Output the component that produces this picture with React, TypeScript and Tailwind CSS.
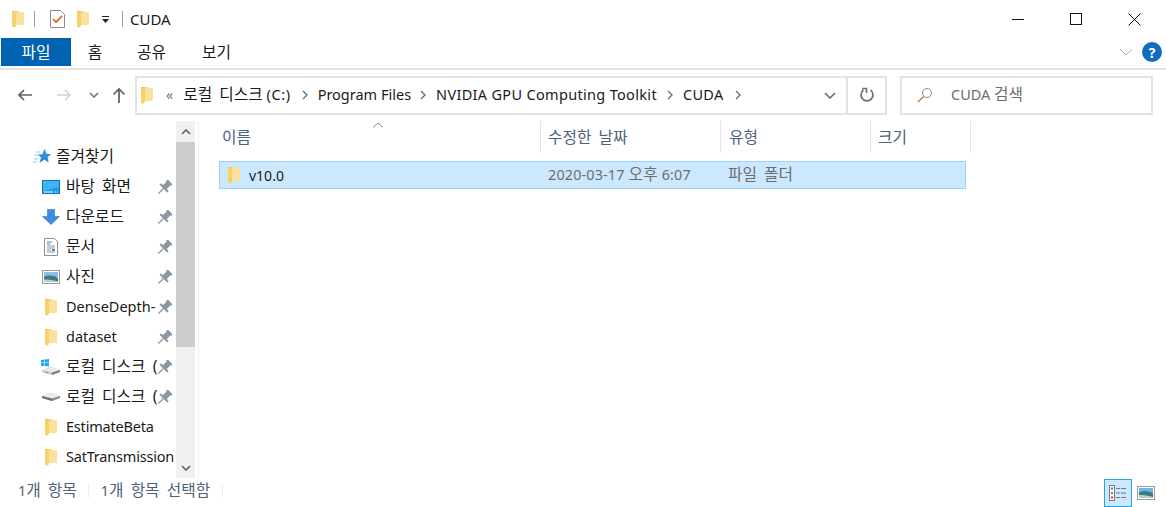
const FONT = "font-['Noto_Sans','Noto_Sans_CJK_KR',sans-serif]";

// hangul runs need a bigger size and wider spaces to match the picture
function K({ children }: { children: string }) {
  return <span className="text-[15.75px] [word-spacing:3px]">{children}</span>;
}

function FolderIcon({ className = "" }: { className?: string }) {
  return (
    <svg viewBox="0 0 14 18" className={`w-[14px] h-[18px] shrink-0 ${className}`}>
      <path d="M1 1h7v1.500h5V15H3.500v2.500L1 16z" fill="#fcd877" />
      <path d="M5 2.500h8V15H5z" fill="#fbe29c" />
      <path d="M1 1h4v15.500L3 17.500H2L1 16z" fill="#f7d16a" />
      <path d="M1 1h3v1H1z" fill="#ecc25a" />
    </svg>
  );
}

function PinIcon() {
  return (
    <svg viewBox="0 0 14 14" className="w-[15px] h-[15px]">
      <g transform="rotate(45 7 7)" fill="#8a96a3">
        <rect x="3.500" y="-0.500" width="7" height="2" />
        <rect x="4.500" y="1" width="5" height="6" />
        <rect x="2" y="6.500" width="10" height="2" />
        <rect x="6.400" y="8" width="1.200" height="7" />
      </g>
    </svg>
  );
}

function NavIcon({ kind }: { kind: string }) {
  if (kind === "star")
    return (
      <svg viewBox="0 0 18 16" className="w-[18px] h-[16px]">
        <path d="M11.500 0l2 4.800 4.500.4-3.400 3.100 1.100 5.200-4.200-2.700-5 3 1.500-5.200-3.200-3 4.600-.4z" fill="#2b8fdd" />
        <path d="M3 3h4M1 6h4M1 10h4M0 13h4" stroke="#8cc6f0" strokeWidth="1" />
      </svg>
    );
  if (kind === "desktop")
    return (
      <svg viewBox="0 0 18 14" className="w-[18px] h-[14px]">
        <rect x="0.500" y="0.500" width="17" height="13" fill="#1e9be8" stroke="#0f74c4" />
        <path d="M1 1h16v6L1 11z" fill="#3fb4f2" />
        <path d="M2 12h9M13 12h1M15 12h1" stroke="#fff" strokeWidth="1" />
      </svg>
    );
  if (kind === "download")
    return (
      <svg viewBox="0 0 18 16" className="w-[18px] h-[16px]">
        <path d="M5.500 0.500h7v7h5L9 15.500 0.500 7.500h5z" fill="#3d8ee0" stroke="#2a78cc" strokeWidth="0.600" />
      </svg>
    );
  if (kind === "doc")
    return (
      <svg viewBox="0 0 14 18" className="w-[14px] h-[18px]">
        <path d="M0.500 0.500h10l3 3v14H0.500z" fill="#fff" stroke="#8f8f8f" />
        <path d="M3 4h5M3 6h3" stroke="#2e8fd8" />
        <path d="M3 8h8M3 10h8M3 12h4M3 14h8" stroke="#8a9aa8" />
        <rect x="8" y="11" width="3" height="2" fill="#2e8fd8" />
      </svg>
    );
  if (kind === "photo")
    return (
      <svg viewBox="0 0 18 14" className="w-[18px] h-[14px]">
        <rect x="0.500" y="0.500" width="17" height="13" fill="#fff" stroke="#9a9a9a" />
        <rect x="2" y="2" width="14" height="5" fill="#8dc0e8" />
        <path d="M2 7c4-2 9-2 14 1v4H2z" fill="#3d7a7a" />
        <path d="M2 9.500c5 0 9 .5 14 2V12H2z" fill="#b7cfd4" />
      </svg>
    );
  if (kind === "winDrive")
    return (
      <svg viewBox="0 0 20 16" className="w-[20px] h-[16px]">
        <path d="M0 1l3.500-.5v3H0zM4 .4L8 0v3.500H4zM0 4h3.500v3H0zM4 4h4v3.500L4 7z" fill="#22a7e8" />
        <path d="M1 11l9-3 9 3v2l-8 3-10-3z" fill="#c9c9c9" />
        <path d="M1 11l10 2.500 8-2.500-9-2.500z" fill="#e9e9e9" />
        <path d="M11 13.500l8-2.500v2l-8 3z" fill="#7b7b7b" />
        <path d="M4 13l3 .8" stroke="#42b04a" />
      </svg>
    );
  if (kind === "drive")
    return (
      <svg viewBox="0 0 20 10" className="w-[20px] h-[10px]">
        <path d="M1 4l9-3 9 3v2l-8 3-10-3z" fill="#c9c9c9" />
        <path d="M1 4l10 2.500 8-2.500-9-2.500z" fill="#ececec" />
        <path d="M11 6.500l8-2.500v2l-8 3z" fill="#8a8a8a" />
        <path d="M1 4v2l10 3V6.500z" fill="#6a6a6a" />
        <path d="M4 6.300l3 .8" stroke="#42b04a" />
      </svg>
    );
  return <FolderIcon />;
}

const NAV_ITEMS = [
  { icon: "desktop", label: "바탕 화면", pin: true, kr: true },
  { icon: "download", label: "다운로드", pin: true, kr: true },
  { icon: "doc", label: "문서", pin: true, kr: true },
  { icon: "photo", label: "사진", pin: true, kr: true },
  { icon: "folder", label: "DenseDepth-", pin: true, kr: false },
  { icon: "folder", label: "dataset", pin: true, kr: false },
  { icon: "winDrive", label: "로컬 디스크 (", pin: true, kr: true },
  { icon: "drive", label: "로컬 디스크 (", pin: true, kr: true },
  { icon: "folder", label: "EstimateBeta", pin: false, kr: false },
  { icon: "folder", label: "SatTransmission", pin: false, kr: false },
];

function Sidebar() {
  return (
    <div className="w-[176px] shrink-0 pt-[21px] overflow-hidden">
      <div className="h-[30px] flex items-center pl-[33px] gap-[5px] text-[#1a1a1a]">
        <NavIcon kind="star" />
        <K>즐겨찾기</K>
      </div>
      {NAV_ITEMS.map((item, i) => (
        <div key={i} className="h-[30px] flex items-center text-[14.5px] text-[#1a1a1a]">
          <div className="w-[66px] pl-[41px] pr-[5px] shrink-0 flex items-center justify-center">
            <NavIcon kind={item.icon} />
          </div>
          <span className={`whitespace-nowrap ${item.pin ? "w-[89px]" : "w-[108px] tracking-[-0.2px]"}`}>
            {item.kr ? <K>{item.label}</K> : item.label}
          </span>
          {item.pin && (
            <span className="ml-[2px]">
              <PinIcon />
            </span>
          )}
        </div>
      ))}
    </div>
  );
}

function Scrollbar() {
  return (
    <div className="w-[19px] h-[357px] flex flex-col bg-[#f0f0f0] shrink-0">
      <div className="h-[21px] flex items-center justify-center">
        <svg viewBox="0 0 10 6" className="w-[10px] h-[6px]">
          <path d="M1 5l4-4 4 4" fill="none" stroke="#606060" strokeWidth="1.600" />
        </svg>
      </div>
      <div className="h-[205px] bg-[#cdcdcd]" />
      <div className="flex-1 flex items-end justify-center pb-[7px]">
        <svg viewBox="0 0 10 6" className="w-[10px] h-[6px]">
          <path d="M1 1l4 4 4-4" fill="none" stroke="#606060" strokeWidth="1.600" />
        </svg>
      </div>
    </div>
  );
}

function Chevron() {
  return (
    <svg viewBox="0 0 6 10" className="w-[6px] h-[10px] shrink-0">
      <path d="M1 1l4 4-4 4" fill="none" stroke="#6a6a6a" strokeWidth="1.300" />
    </svg>
  );
}

function FileList() {
  const cols = [
    { label: "이름", cls: "w-[322px] pl-[3px]" },
    { label: "수정한 날짜", cls: "w-[180px] pl-[7px]" },
    { label: "유형", cls: "w-[150px] pl-[8px]" },
    { label: "크기", cls: "w-[100px] pl-[7px]" },
  ];
  return (
    <div className="flex-1 pl-[20px] min-w-0 ml-[3px] border-l border-[#f0f0f0]">
      <div className="relative flex h-[32px] text-[#4c607a]">
        {cols.map((c) => (
          <div key={c.label} className={`${c.cls} pt-[1px] flex items-center border-r border-[#e5e5e5] box-border`}>
            <K>{c.label}</K>
          </div>
        ))}
        <svg viewBox="0 0 12 6" className="absolute left-[153px] top-[1px] w-[12px] h-[6px]">
          <path d="M1 5.500l5-4.500 5 4.500" fill="none" stroke="#8a8a8a" />
        </svg>
      </div>
      <div className="mt-[8px] w-[747px] h-[28px] flex items-center bg-[#cce8ff] border border-[#99d1ff] text-[14.4px]">
        <div className="w-[321px] flex items-center pl-[7px] gap-[8px] text-[#1a1a1a]">
          <FolderIcon />
          <span className="text-[14px]">v10.0</span>
        </div>
        <span className="w-[180px] pl-[7px] text-[#6d6d6d] tracking-[0.15px]">
          2020-03-17 <K>오후</K> 6:07
        </span>
        <span className="pl-[7px] text-[#6d6d6d]">
          <K>파일 폴더</K>
        </span>
      </div>
    </div>
  );
}

export default function App() {
  return (
    <div className={`w-[1166px] h-[507px] bg-white overflow-hidden flex flex-col ${FONT}`}>
      {/* title bar */}
      <div className="h-[38px] flex items-center shrink-0">
        <div className="pl-[11px] flex items-center">
          <FolderIcon />
        </div>
        <div className="ml-[9px] w-px h-[16px] bg-[#a0a0a0]" />
        <svg viewBox="0 0 15 18" className="ml-[15px] w-[15px] h-[18px]">
          <path d="M0.500 0.500h10l4 4v13H0.500z" fill="#fff" stroke="#8c8c8c" />
          <path d="M3 9l3 3 6-6" fill="none" stroke="#e8541e" strokeWidth="1.700" />
        </svg>
        <FolderIcon className="ml-[11px]" />
        <svg viewBox="0 0 7 7" className="ml-[12px] w-[7px] h-[7px]">
          <path d="M0 0h7v1H0zM0 3h7L3.500 7z" fill="#222" />
        </svg>
        <div className="ml-[13px] w-px h-[16px] bg-[#a0a0a0]" />
        <span className="ml-[7px] text-[15px] text-[#1a1a1a]">CUDA</span>
        <div className="ml-auto flex items-center h-full">
          <div className="w-[58px] flex justify-center">
            <div className="w-[12px] h-px bg-[#111]" />
          </div>
          <div className="w-[58px] flex justify-center">
            <div className="w-[12px] h-[12px] border border-[#111]" />
          </div>
          <div className="w-[58px] flex justify-center">
            <svg viewBox="0 0 13 13" className="w-[13px] h-[13px]">
              <path d="M0.500 0.500l12 12M12.500 0.500l-12 12" stroke="#111" />
            </svg>
          </div>
          <div className="w-[3px]" />
        </div>
      </div>

      {/* ribbon tabs */}
      <div className="h-[32px] shrink-0 flex border-b-2 border-[#e3e3e3] text-[#1a1a1a] pl-[1px]">
        <div className="w-[70px] h-[28px] bg-[#0063b1] text-white flex items-center justify-center pt-[1px]">
          <K>파일</K>
        </div>
        <div className="h-[28px] w-[48px] flex items-center justify-center pt-[2px]">
          <K>홈</K>
        </div>
        <div className="h-[28px] w-[65px] flex items-center justify-center pt-[2px]">
          <K>공유</K>
        </div>
        <div className="h-[28px] w-[65px] flex items-center justify-center pt-[2px]">
          <K>보기</K>
        </div>
        <div className="ml-auto mr-[4px] h-[28px] flex items-center gap-[9px]">
          <svg viewBox="0 0 14 8" className="w-[14px] h-[8px]">
            <path d="M1 1l6 6 6-6" fill="none" stroke="#b5b5b5" />
          </svg>
          <div className="w-[20px] h-[20px] rounded-full bg-[#0f6cc0] text-white text-[14px] font-bold flex items-center justify-center">?</div>
        </div>
      </div>

      {/* address row */}
      <div className="h-[51px] shrink-0 flex items-center pt-[5px] pb-[6px]">
        <div className="w-[135px] flex items-center shrink-0 pl-[17px]">
          <svg viewBox="0 0 16 14" className="w-[16px] h-[14px]">
            <path d="M15 7H2M7 2L2 7l5 5" fill="none" stroke="#5f5f5f" strokeWidth="1.700" />
          </svg>
          <svg viewBox="0 0 16 14" className="ml-[23px] w-[16px] h-[14px]">
            <path d="M1 7h13M9 2l5 5-5 5" fill="none" stroke="#d4d4d4" strokeWidth="1.700" />
          </svg>
          <svg viewBox="0 0 10 6" className="ml-[17px] w-[10px] h-[6px]">
            <path d="M1 1l4 4 4-4" fill="none" stroke="#777" strokeWidth="1.600" />
          </svg>
          <svg viewBox="0 0 14 16" className="ml-[13px] w-[14px] h-[16px]">
            <path d="M7 16V2M1.500 7.500L7 2l5.500 5.500" fill="none" stroke="#5f5f5f" strokeWidth="1.700" />
          </svg>
        </div>
        <div className="w-[752px] h-[39px] shrink-0 flex items-center border-2 border-[#e3e3e3] text-[14.5px] text-[#1a1a1a]">
          <FolderIcon className="ml-[3px]" />
          <span className="ml-[12px] text-[#777] text-[14px] leading-none">«</span>
          <span className="ml-[10px]">
            <K>로컬 디스크</K> <span className="tracking-[0.6px]">(C:)</span>
          </span>
          <span className="ml-[11px]"><Chevron /></span>
          <span className="ml-[10px]">Program Files</span>
          <span className="ml-[9px]"><Chevron /></span>
          <span className="ml-[10px] tracking-[0.32px]">NVIDIA GPU Computing Toolkit</span>
          <span className="ml-[10px]"><Chevron /></span>
          <span className="ml-[10px] tracking-[0.3px]">CUDA</span>
          <span className="ml-[11px]"><Chevron /></span>
          <div className="ml-auto flex items-center h-full">
            <svg viewBox="0 0 12 7" className="mr-[10px] w-[12px] h-[7px]">
              <path d="M1 1l5 5 5-5" fill="none" stroke="#666" strokeWidth="1.500" />
            </svg>
            <div className="w-[39px] h-full border-l-2 border-[#e3e3e3] flex items-center justify-center">
              <svg viewBox="0 0 16 16" className="w-[16px] h-[16px]">
                <path d="M11.500 3a6 6 0 1 1-7 0" fill="none" stroke="#707070" strokeWidth="1.700" />
                <path d="M3 1.500h4.500V6" fill="none" stroke="#707070" strokeWidth="1.700" />
              </svg>
            </div>
          </div>
        </div>
        <div className="ml-[13px] w-[253px] h-[39px] shrink-0 flex items-center border-2 border-[#e3e3e3] text-[14.5px] text-[#6d6d6d]">
          <svg viewBox="0 0 16 16" className="ml-[15px] w-[16px] h-[16px]">
            <circle cx="10" cy="6" r="4.500" fill="none" stroke="#8a8a8a" />
            <path d="M6.500 9.500L1 15" stroke="#b07a4a" strokeWidth="1.200" />
          </svg>
          <span className="ml-[18px]">
            CUDA <K>검색</K>
          </span>
        </div>
      </div>

      {/* body */}
      <div className="flex flex-1 min-h-0">
        <Sidebar />
        <Scrollbar />
        <FileList />
      </div>

      {/* status bar */}
      <div className="h-[29px] shrink-0 flex items-center text-[14.4px] text-[#4c607a] pl-[18px]">
        <div className="flex items-center pb-[4px]">
          <span>
            1<K>개 항목</K>
          </span>
          <div className="ml-[11px] mr-[12px] w-px h-[14px] bg-[#efefef]" />
          <span>
            1<K>개 항목 선택함</K>
          </span>
          <div className="ml-[12px] w-px h-[14px] bg-[#efefef]" />
        </div>
        <div className="ml-auto flex items-center mr-[11px] gap-[5px]">
          <div className="w-[28px] h-[28px] bg-[#cce8ff] border border-[#2ba1dd] flex items-center justify-center">
            <svg viewBox="0 0 18 16" className="w-[18px] h-[16px]">
              <rect x="0.500" y="0.500" width="5" height="15" fill="#fff" stroke="#777" />
              <rect x="2" y="2.500" width="2" height="2" fill="#2b7bd0" />
              <rect x="2" y="7" width="2" height="2" fill="#a57b1f" />
              <rect x="2" y="11.500" width="2" height="2" fill="#d0342b" />
              <path d="M7 3.500h4M12 3.500h5M7 8h4M12 8h5M7 12.500h4M12 12.500h5" stroke="#777" />
            </svg>
          </div>
          <svg viewBox="0 0 18 14" className="w-[18px] h-[14px]">
            <rect x="0.500" y="0.500" width="17" height="13" fill="#fff" stroke="#9a9a9a" />
            <rect x="2" y="2" width="14" height="5" fill="#6fb2ef" />
            <path d="M2 6c4-1 9-1 14 1v5H2z" fill="#3d7a7a" />
            <path d="M2 9c5 0 9 .5 14 2v1H2z" fill="#b7cfd4" />
          </svg>
        </div>
      </div>
    </div>
  );
}
